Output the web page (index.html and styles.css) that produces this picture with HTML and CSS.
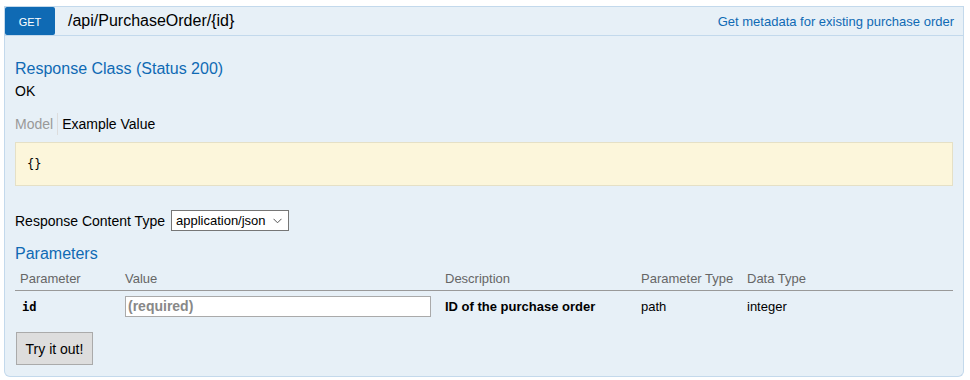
FILE: index.html
```html
<!DOCTYPE html>
<html lang="en">
<head>
    <meta charset="UTF-8">
    <title>PurchaseOrder API</title>
    <link rel="stylesheet" href="styles.css">
</head>
<body>
    <div class="operation">
        <div class="heading">
            <span class="http-method">GET</span>
            <span class="path">/api/PurchaseOrder/{id}</span>
            <span class="summary">Get metadata for existing purchase order</span>
        </div>

        <div class="content">
            <h4>Response Class (Status 200)</h4>
            <div class="status-text">OK</div>

            <div class="signature-tabs">
                <span class="tab tab-inactive">Model</span>
                <span class="tab tab-active">Example Value</span>
            </div>
            <div class="snippet"><pre>{}</pre></div>

            <div class="content-type">
                <label>Response Content Type</label>
                <div class="select">
                    <span>application/json</span>
                    <svg width="9" height="6" viewBox="0 0 9 6"><path d="M0.5 0.8 L4.5 4.8 L8.5 0.8" fill="none" stroke="#555" stroke-width="1"/></svg>
                </div>
            </div>

            <h4 class="params-title">Parameters</h4>
            <table class="params">
                <colgroup>
                    <col class="c-param">
                    <col class="c-value">
                    <col class="c-desc">
                    <col class="c-ptype">
                    <col class="c-dtype">
                </colgroup>
                <thead>
                    <tr>
                        <th>Parameter</th>
                        <th>Value</th>
                        <th>Description</th>
                        <th>Parameter Type</th>
                        <th>Data Type</th>
                    </tr>
                </thead>
                <tbody>
                    <tr>
                        <td class="code">id</td>
                        <td><div class="input">(required)</div></td>
                        <td class="desc">ID of the purchase order</td>
                        <td>path</td>
                        <td class="dtype">integer</td>
                    </tr>
                </tbody>
            </table>

            <div class="sandbox">
                <button class="submit">Try it out!</button>
            </div>
        </div>
    </div>
</body>
</html>
```

FILE: styles.css
```css
* {
    box-sizing: border-box;
}

body {
    margin: 0;
    background: #fff;
    font-family: "Liberation Sans", Arial, sans-serif;
    color: #000;
}

.operation {
    margin: 6px 6px 0 4px;
}

.heading {
    display: flex;
    align-items: center;
    height: 30px;
    background: #e7f0f7;
    border: 1px solid #c3d9ec;
}

.http-method {
    width: 50px;
    height: 28px;
    background: #0f6ab4;
    color: #fff;
    font-size: 11px;
    line-height: 30px;
    text-align: center;
    border-radius: 2px;
}

.path {
    margin-left: 13px;
    font-size: 16px;
}

.summary {
    margin-left: auto;
    margin-right: 9px;
    font-size: 13px;
    color: #0f6ab4;
}

.content {
    background: #e7f0f7;
    border: 1px solid #c3d9ec;
    border-top: none;
    border-radius: 0 0 6px 6px;
    padding: 24px 10px 11px 10px;
    height: 341px;
}

h4 {
    margin: 0;
    font-size: 16px;
    line-height: 18px;
    font-weight: normal;
    color: #0f6ab4;
}

.status-text {
    margin-top: 5px;
    font-size: 14px;
    line-height: 16px;
    color: #000;
}

.signature-tabs {
    display: flex;
    margin-top: 14px;
    height: 22px;
    font-size: 14px;
    line-height: 22px;
}

.tab {
    padding-right: 4px;
}

.tab-inactive {
    color: #999;
    border-right: 1px solid #ddd;
    margin-right: 4px;
}

.snippet {
    margin-top: 7px;
    height: 44px;
    background: #fcf6db;
    border: 1px solid #e5e0c6;
    padding: 0 11px;
    display: flex;
    align-items: center;
}

.snippet pre {
    margin: 0;
    font-family: "DejaVu Sans Mono", "Liberation Mono", monospace;
    font-size: 12px;
    color: #000;
}

.content-type {
    display: flex;
    align-items: center;
    margin-top: 24px;
    font-size: 14px;
}

.content-type label {
    margin-right: 6px;
}

.select {
    display: flex;
    align-items: center;
    justify-content: space-between;
    width: 118px;
    height: 21px;
    padding: 0 6px 0 4px;
    background: #fff;
    border: 1px solid #767676;
    font-size: 13px;
}

.params-title {
    margin-top: 14px;
}

.params {
    width: 100%;
    table-layout: fixed;
    border-collapse: collapse;
    margin-top: 4px;
    font-size: 13px;
}

.c-param { width: 105px; }
.c-value { width: 320px; }
.c-desc { width: 196px; }
.c-ptype { width: 106px; }

.params th {
    text-align: left;
    font-weight: normal;
    color: #666;
    padding: 4px 5px 4px;
    border-bottom: 1px solid #999;
}

.params td {
    padding: 5px 5px 0;
    vertical-align: middle;
    font-size: 13px;
}

.params td.code {
    font-family: "DejaVu Sans Mono", "Liberation Mono", monospace;
    font-weight: bold;
    font-size: 12px;
    padding-left: 7px;
}

.params td.desc {
    font-weight: bold;
}

.input {
    width: 306px;
    height: 21px;
    padding: 0 2px;
    background: #fff;
    border: 1px solid #aaa;
    color: #888;
    font-weight: bold;
    font-size: 14px;
    line-height: 19px;
}

.sandbox {
    margin-top: 15px;
}

.submit {
    width: 77px;
    height: 33px;
    margin-left: 1px;
    padding: 0;
    background: #ddd;
    border: 1px solid #aaa;
    font-family: "Liberation Sans", Arial, sans-serif;
    font-size: 14px;
    color: #000;
}
```
